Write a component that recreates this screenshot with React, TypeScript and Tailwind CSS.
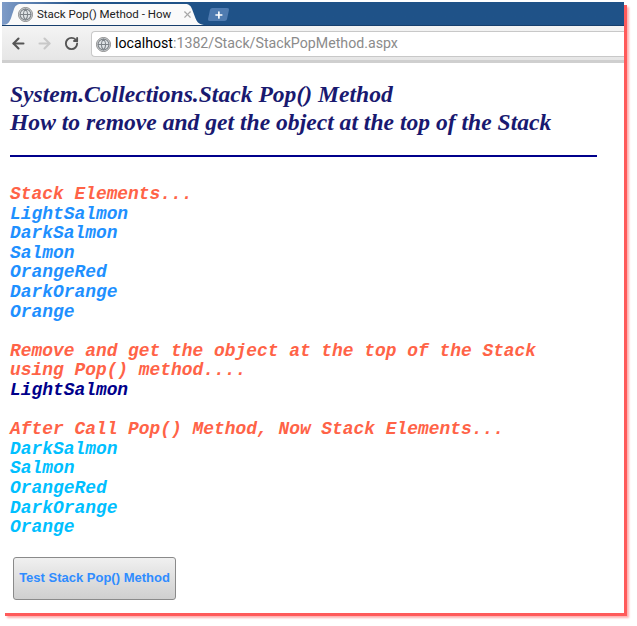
import { ArrowLeft, ArrowRight, RotateCw, Globe, X, Plus } from 'lucide-react';

const stackBefore = ['LightSalmon', 'DarkSalmon', 'Salmon', 'OrangeRed', 'DarkOrange', 'Orange'];
const stackAfter = ['DarkSalmon', 'Salmon', 'OrangeRed', 'DarkOrange', 'Orange'];

function GlobeIcon({ size }: { size: number }) {
  return (
    <span
      className="flex shrink-0 items-center justify-center rounded-full border border-[#8a8a8a] bg-[#dfe3e6] text-[#7d8388]"
      style={{ width: size, height: size }}
    >
      <Globe size={size - 2} strokeWidth={2} />
    </span>
  );
}

export default function App() {
  return (
    <div className="h-[626px] w-[637px] overflow-hidden bg-white pl-[2px] pt-[2px]">
      <div className="h-[611px] w-[622px] bg-white shadow-[3px_3px_0_0_#ff5a5a,5px_5px_2px_0_#ffb0b0]">
        {/* Browser tab strip */}
        <div className="flex h-[24px] items-end border-b border-[#173f6d] bg-gradient-to-r from-[#7f9cc8] via-[#1f5288] via-[12%] to-[#1f5288]">
          <div className="relative h-[21px] w-[204px]">
            <svg className="absolute inset-0" width="204" height="21" viewBox="0 0 204 21">
              <path d="M0 21 C6 21 8 18 10 11 L12 5 C13 2 15 0 19 0 H183 C187 0 189 2 190 5 L193 13 C195 19 198 21 204 21 Z" fill="#fafafa" />
            </svg>
            <div className="relative flex h-full items-center pl-[16px] font-['Roboto',sans-serif] text-[11.5px] text-[#222]">
              <GlobeIcon size={15} />
              <span className="ml-[4px] w-[138px] overflow-hidden whitespace-nowrap">Stack Pop() Method - How</span>
              <X size={11} className="ml-[7px] text-[#a8a8a8]" strokeWidth={2.5} />
            </div>
          </div>
          <div className="mb-[4px] ml-[3px] flex h-[13px] w-[19px] -skew-x-12 items-center justify-center rounded-[2px] bg-[#4f7bb0]">
            <Plus size={10} strokeWidth={4} className="skew-x-12 text-white" />
          </div>
        </div>

        {/* Toolbar */}
        <div className="flex h-[34px] items-start bg-gradient-to-b from-[#f4f4f4] to-[#e6e6e6] pt-[5px]">
          <div className="flex h-[25px] w-[89px] items-center pl-[8px]">
            <ArrowLeft size={17} strokeWidth={3} className="text-[#555]" />
            <ArrowRight size={17} strokeWidth={3} className="ml-[9px] text-[#c8c8c8]" />
            <RotateCw size={15} strokeWidth={3} className="ml-[11px] text-[#555]" />
          </div>
          <div className="flex h-[26px] flex-1 items-center rounded-l-[4px] border border-r-0 border-[#c8c8c8] bg-white pl-[4px] font-['Roboto',sans-serif] text-[14.2px]">
            <GlobeIcon size={15} />
            <span className="ml-[4px] text-black">localhost</span>
            <span className="text-[#8b8b8b]">:1382/Stack/StackPopMethod.aspx</span>
          </div>
        </div>
        <div className="h-[3px] bg-[#cfcfcf]" />

        {/* Page */}
        <div className="pl-[8px] pt-[17px]">
          <h1 className="font-['Liberation_Serif',serif] text-[23.6px] leading-[28px] font-bold text-[#191970] italic">
            System.Collections.Stack Pop() Method
            <br />
            How to remove and get the object at the top of the Stack
          </h1>
          <hr className="mt-[19px] h-[2px] w-[587px] border-0 bg-[#00008b]" />

          <div className="mt-[28px] font-['Liberation_Mono',monospace] text-[17.9px] leading-[19.6px] font-bold italic">
            <div className="text-[#ff6347]">Stack Elements...</div>
            {stackBefore.map((name) => (
              <div key={name} className="text-[#1e90ff]">{name}</div>
            ))}
            <br />
            <div className="text-[#ff6347]">
              Remove and get the object at the top of the Stack
              <br />
              using Pop() method....
            </div>
            <div className="text-[#00008b]">LightSalmon</div>
            <br />
            <div className="text-[#ff6347]">After Call Pop() Method, Now Stack Elements...</div>
            {stackAfter.map((name) => (
              <div key={name} className="text-[#00bfff]">{name}</div>
            ))}
          </div>

          <button className="mt-[19px] ml-[3px] flex h-[43px] w-[163px] items-center justify-center rounded-[3px] border border-[#8a8a8a] bg-gradient-to-b from-[#f0f0f0] to-[#cfcfcf] font-['Liberation_Sans',sans-serif] text-[13px] font-bold text-[#2f8cff]">
            Test Stack Pop() Method
          </button>
        </div>
      </div>
    </div>
  );
}
